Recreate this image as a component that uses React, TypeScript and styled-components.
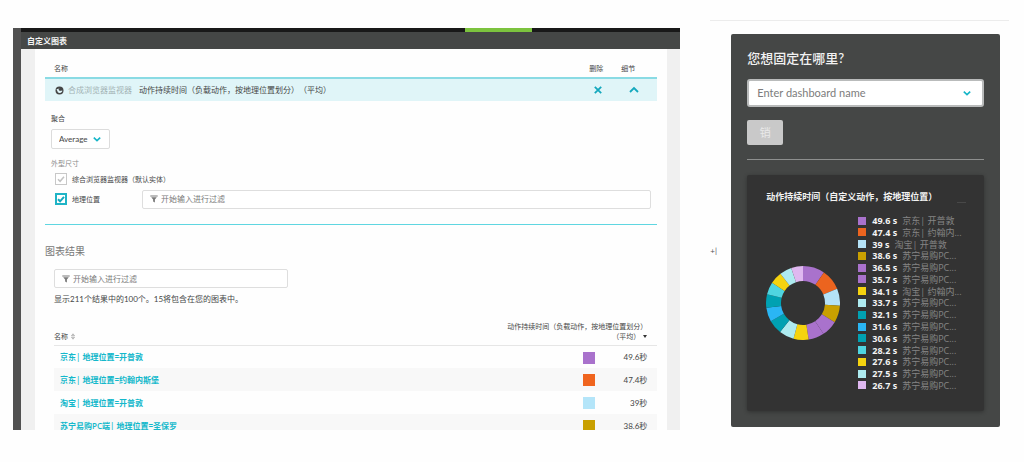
import React from "react";
import styled, { createGlobalStyle } from "styled-components";

const GlobalStyle = createGlobalStyle`
  *, *::before, *::after { box-sizing: border-box; }
  body {
    margin: 0;
    background: #fefefe;
    color: #454646;
    font-family: Lato, "Noto Sans CJK SC", sans-serif;
    font-size: 8px;
    line-height: 12px;
    text-spacing-trim: space-all;
  }
  button, input, select { font: inherit; color: inherit; }
  h1, h2, h3, p, ul { margin: 0; padding: 0; font-weight: 400; }
`;

const Page = styled.div`
  display: flex;
  height: 100vh;
  min-height: 440px;
  padding-left: 13px;
`;

/* ---------- custom chart window ---------- */

const ChartWindow = styled.section`
  flex: 660 1 0;
  min-width: 0;
  display: flex;
  margin: 28px 0 32px;
  border-left: 8px solid #515151;
  overflow: hidden;
`;

const WindowMain = styled.div`
  flex: 1;
  min-width: 0;
  display: flex;
  flex-direction: column;
`;

const LoadBar = styled.div`
  flex: none;
  height: 4px;
  background: linear-gradient(#7cc33e, #7cc33e) 75% 0 / 67px 4px no-repeat #191919;
`;

const WindowHeader = styled.header`
  flex: none;
  display: flex;
  align-items: center;
  height: 17px;
  padding: 0 6px;
  background: #454746;
`;

const WindowTitle = styled.h1`
  font-size: 8px;
  font-weight: 600;
  color: #f4f4f4;
`;

const WindowBody = styled.main`
  flex: 1;
  min-height: 0;
  overflow: hidden;
  padding: 0 10px;
  border: solid #f0f0f0;
  border-width: 0 13px 0 14px;
`;

const MetricsHead = styled.div`
  display: flex;
  justify-content: flex-end;
  align-items: center;
  height: 28px;
  padding: 10px 22px 0 9px;
  gap: 18px;
  font-size: 7px;
`;

const HeadName = styled.span`
  flex: 1;
`;

const MetricRow = styled.div`
  display: flex;
  align-items: center;
  height: 24px;
  padding: 0 18px 0 10px;
  border-top: 2px solid #8adbe4;
  background: #e0f5f8;
`;

const MetricSource = styled.span`
  margin: 0 7px 0 4px;
  color: #a3b3b5;
`;

const MetricName = styled.span`
  flex: 1;
`;

const IconButton = styled.button`
  display: flex;
  padding: 0;
  margin-left: 26px;
  border: 0;
  background: none;
  color: #14a8bd;
  cursor: pointer;
`;

const Settings = styled.div`
  padding: 11px 6px 15px;
  border-bottom: 1px solid #5fd6e1;
  font-size: 7px;
`;

const FieldLabel = styled.label`
  display: block;
  font-size: 7px;
`;

const SelectBox = styled.span<{ $wide?: boolean }>`
  display: ${(p) => (p.$wide ? "grid" : "inline-grid")};
  grid-template-columns: 1fr ${(p) => (p.$wide ? "19px" : "16px")};
  align-items: center;
  width: ${(p) => (p.$wide ? "auto" : "59px")};
  height: ${(p) => (p.$wide ? "28px" : "20px")};
  margin-top: ${(p) => (p.$wide ? "12px" : "5px")};
  border: ${(p) => (p.$wide ? "2px solid #b9bbbb" : "1px solid #dcdcdc")};
  border-radius: ${(p) => (p.$wide ? "3px" : "2px")};
  background: #fff;
  color: #14b5c8;
`;

const NativeSelect = styled.select<{ $wide?: boolean }>`
  grid-area: 1 / 1 / 2 / 3;
  width: 100%;
  height: 100%;
  padding: 0 0 0 ${(p) => (p.$wide ? "8px" : "7px")};
  border: 0;
  outline: 0;
  appearance: none;
  background: none;
  color: ${(p) => (p.$wide ? "#7c7c7c" : "#454646")};
  font-size: ${(p) => (p.$wide ? "11px" : "8px")};
`;

const SelectArrow = styled.span`
  display: flex;
  grid-area: 1 / 2 / 2 / 3;
  pointer-events: none;
`;

const GroupTitle = styled.p`
  margin-top: 8px;
  color: #8b8b8b;
`;

const DimensionRow = styled.div`
  display: flex;
  align-items: center;
  height: 20px;
  padding-left: 4px;
`;

const CheckLabel = styled.label<{ $width?: string }>`
  display: flex;
  align-items: center;
  gap: 5px;
  width: ${(p) => p.$width ?? "auto"};
`;

const CheckBox = styled.input`
  appearance: none;
  width: 12px;
  height: 12px;
  margin: 0;
  border: 1px solid #c8c8c8;
  background: #fff
    url("data:image/svg+xml,%3Csvg xmlns='http://www.w3.org/2000/svg' viewBox='0 0 12 12'%3E%3Cpath d='M3 6.2l2.1 2.1L9 3.8' fill='none' stroke='%23c2c2c2' stroke-width='1.5'/%3E%3C/svg%3E")
    center / 12px no-repeat;
  &:enabled {
    border: 2px solid #1fb4c6;
    background-image: url("data:image/svg+xml,%3Csvg xmlns='http://www.w3.org/2000/svg' viewBox='0 0 12 12'%3E%3Cpath d='M3 6.2l2.1 2.1L9 3.8' fill='none' stroke='%2314a8bd' stroke-width='2'/%3E%3C/svg%3E");
  }
`;

const FilterBox = styled.label<{ $width?: string }>`
  display: flex;
  align-items: center;
  gap: 3px;
  flex: ${(p) => (p.$width ? "none" : "1")};
  width: ${(p) => p.$width ?? "auto"};
  height: 19px;
  padding-left: 7px;
  border: 1px solid #dedede;
  border-radius: 2px;
  background: #fff;
  color: #7a7a7a;
`;

const FilterInput = styled.input`
  flex: 1;
  min-width: 0;
  padding: 0;
  border: 0;
  outline: 0;
  background: none;
  font-size: 8px;
  &::placeholder { color: #7a7a7a; opacity: 1; }
`;

const Results = styled.section`
  padding: 19px 0 0 9px;
`;

const ResultsTitle = styled.h2`
  margin: 0 0 10px -9px;
  font-size: 10px;
  line-height: 15px;
  color: #777;
`;

const ResultCount = styled.p`
  margin: 5px 0 13px;
`;

const ResultTable = styled.table`
  width: 100%;
  border-collapse: collapse;
  table-layout: fixed;
`;

const Column = styled.col<{ $width?: string }>`
  width: ${(p) => p.$width ?? "auto"};
`;

const HeadCell = styled.th<{ $right?: boolean }>`
  height: 27px;
  padding: 0 ${(p) => (p.$right ? "10px" : "0")} 4px 0;
  border-bottom: 1px solid #e6e6e6;
  font-size: 7px;
  font-weight: 400;
  line-height: 10px;
  text-align: ${(p) => (p.$right ? "right" : "left")};
  vertical-align: bottom;
  white-space: nowrap;
`;

const SortIcon = styled.svg`
  margin-left: 3px;
  vertical-align: -1px;
`;

const ResultRow = styled.tr`
  &:nth-child(even) { background: #f8f8f8; }
`;

const Cell = styled.td<{ $right?: boolean }>`
  height: 23px;
  padding: 1px 10px 0 6px;
  text-align: ${(p) => (p.$right ? "right" : "left")};
  white-space: nowrap;
`;

const EntityLink = styled.a`
  color: #14b8cb;
  font-family: "Open Sans", "Noto Sans CJK SC", sans-serif;
  font-weight: 600;
  text-decoration: none;
`;

const Swatch = styled.span<{ $color: string; $size: number }>`
  display: inline-block;
  flex: none;
  width: ${(p) => p.$size}px;
  height: ${(p) => p.$size}px;
  background: ${(p) => p.$color};
  vertical-align: middle;
`;

/* ---------- pin dialog ---------- */

const PinArea = styled.section`
  flex: 299 1 0;
  min-width: 0;
  margin: 20px 15px 0 30px;
  border-top: 1px solid #ececec;
`;

const PinRow = styled.div`
  display: flex;
  align-items: center;
  margin: 13px 9px 0 0;
`;

const CutText = styled.span`
  flex: none;
  width: 21px;
  margin-top: 40px;
  color: #555;
  font-size: 8px;
`;

const PinCard = styled.div`
  flex: 1;
  min-width: 0;
  padding: 16px;
  border-radius: 2px;
  background: #454746;
`;

const PinTitle = styled.h2`
  font-size: 13px;
  line-height: 17px;
  color: #f2f2f2;
  font-weight: 500;
`;

const PinButton = styled.button`
  display: block;
  width: 36px;
  height: 25px;
  margin-top: 13px;
  padding: 0;
  border: 0;
  border-radius: 2px;
  background: #c9c9c9;
  color: #e9e9e9;
  font-size: 11px;
`;

const Divider = styled.hr`
  margin: 14px 0 15px;
  border: 0;
  border-top: 1px solid #8d8f8e;
`;

const Tile = styled.article`
  padding: 15px 18px 20px 19px;
  border-radius: 2px;
  background: #333;
  box-shadow: 0 1px 4px rgba(0, 0, 0, 0.3);
`;

const TileHead = styled.div`
  display: flex;
  justify-content: space-between;
  align-items: flex-end;
`;

const TileTitle = styled.h3`
  font-size: 9px;
  line-height: 13px;
  font-weight: 600;
  white-space: nowrap;
  color: #f2f2f2;
`;

const TileDash = styled.span`
  width: 9px;
  height: 1px;
  background: #484848;
`;

const TileBody = styled.div`
  display: flex;
  align-items: center;
  gap: 18px;
  margin-top: 12px;
`;

const DonutSvg = styled.svg`
  flex: none;
`;

const Legend = styled.ul`
  display: flex;
  flex-direction: column;
  justify-content: space-between;
  height: 176px;
  list-style: none;
  font-family: "Open Sans", "Noto Sans CJK SC", sans-serif;
`;

const LegendItem = styled.li`
  display: flex;
  align-items: center;
  height: 11px;
  font-size: 9px;
  line-height: 11px;
  white-space: nowrap;
  color: #858585;
`;

const LegendValue = styled.strong`
  margin: 0 5px 0 6px;
  font-weight: 700;
  color: #f4f4f4;
`;

const Chevron = ({ up }: { up?: boolean }) => (
  <svg width={up ? 10 : 8} height={up ? 10 : 8} viewBox="0 0 10 10" fill="none" stroke="currentColor" strokeWidth={up ? 1.8 : 2}>
    <path d={up ? "M1 7l4-4 4 4" : "M1 3.300l4 3.700 4-3.700"} />
  </svg>
);

const Funnel = () => (
  <svg width="8" height="8" viewBox="0 0 8 8" fill="currentColor">
    <path d="M.3.5h7.400v1H.3zM1.200 2.200h5.600L4.900 4.600v2.900L3.100 6.500V4.600z" />
  </svg>
);

const results = [
  { name: "京东| 地理位置=开普敦", value: "49.6秒", color: "#a972cc" },
  { name: "京东| 地理位置=约翰内斯堡", value: "47.4秒", color: "#f0651f" },
  { name: "淘宝| 地理位置=开普敦", value: "39秒", color: "#b4e5f9" },
  { name: "苏宁易购PC端| 地理位置=圣保罗", value: "38.6秒", color: "#c9a000" },
];

const slices = [
  { value: 49.6, label: "京东| 开普敦", color: "#a972cc" },
  { value: 47.4, label: "京东| 约翰内...", color: "#ec641f" },
  { value: 39, label: "淘宝| 开普敦", color: "#b4e2f7" },
  { value: 38.6, label: "苏宁易购PC...", color: "#c9a000" },
  { value: 36.5, label: "苏宁易购PC...", color: "#a972cc" },
  { value: 35.7, label: "苏宁易购PC...", color: "#a972cc" },
  { value: 34.1, label: "淘宝| 约翰内...", color: "#f5d30f" },
  { value: 33.7, label: "苏宁易购PC...", color: "#aeebf0" },
  { value: 32.1, label: "苏宁易购PC...", color: "#00a1b2" },
  { value: 31.6, label: "苏宁易购PC...", color: "#2ab6f4" },
  { value: 30.6, label: "苏宁易购PC...", color: "#00a1b2" },
  { value: 28.2, label: "苏宁易购PC...", color: "#4fd5e0" },
  { value: 27.6, label: "苏宁易购PC...", color: "#f5d30f" },
  { value: 27.5, label: "苏宁易购PC...", color: "#aeebf0" },
  { value: 26.7, label: "苏宁易购PC...", color: "#dfb8f0" },
];

const total = slices.reduce((sum, s) => sum + s.value, 0);

const point = (fraction: number, radius: number) => {
  const a = fraction * 2 * Math.PI;
  return `${37 + radius * Math.sin(a)} ${37 - radius * Math.cos(a)}`;
};

const Donut = () => {
  let start = 0;
  return (
    <DonutSvg width="74" height="74" viewBox="0 0 74 74">
      {slices.map((s, i) => {
        const end = start + s.value / total;
        const d = `M${point(start, 37)}A37 37 0 0 1 ${point(end, 37)}L${point(end, 22)}A22 22 0 0 0 ${point(start, 22)}Z`;
        start = end;
        return <path key={i} d={d} fill={s.color} />;
      })}
    </DonutSvg>
  );
};

export default function App() {
  return (
    <>
      <GlobalStyle />
      <Page>
        <ChartWindow>
          <WindowMain>
            <LoadBar />
            <WindowHeader>
              <WindowTitle>自定义图表</WindowTitle>
            </WindowHeader>
            <WindowBody>
              <MetricsHead>
                <HeadName>名称</HeadName>
                <span>删除</span>
                <span>细节</span>
              </MetricsHead>
              <MetricRow>
                <svg width="9" height="9" viewBox="0 0 9 9">
                  <circle cx="4.500" cy="4.500" r="4" fill="#454646" />
                  <path d="M1.500 3.200l3-.7.8 2 2.200.3A3 3 0 0 1 3 6.500z" fill="#e0f5f8" />
                  <circle cx="5" cy="3.500" r="1.300" fill="#454646" />
                </svg>
                <MetricSource>合成浏览器监视器</MetricSource>
                <MetricName>动作持续时间（负载动作，按地理位置划分）（平均）</MetricName>
                <IconButton aria-label="删除">
                  <svg width="10" height="10" viewBox="0 0 10 10" stroke="currentColor" strokeWidth="1.800">
                    <path d="M1.800 1.800l6.400 6.400M8.200 1.800L1.800 8.200" />
                  </svg>
                </IconButton>
                <IconButton aria-label="细节">
                  <Chevron up />
                </IconButton>
              </MetricRow>
              <Settings>
                <FieldLabel htmlFor="aggregation">聚合</FieldLabel>
                <SelectBox>
                  <NativeSelect id="aggregation">
                    <option>Average</option>
                  </NativeSelect>
                  <SelectArrow><Chevron /></SelectArrow>
                </SelectBox>
                <GroupTitle>外型尺寸</GroupTitle>
                <DimensionRow>
                  <CheckLabel>
                    <CheckBox type="checkbox" defaultChecked disabled />
                    综合浏览器监视器（默认实体）
                  </CheckLabel>
                </DimensionRow>
                <DimensionRow>
                  <CheckLabel $width="87px">
                    <CheckBox type="checkbox" defaultChecked />
                    地理位置
                  </CheckLabel>
                  <FilterBox>
                    <Funnel />
                    <FilterInput type="text" placeholder="开始输入进行过滤" />
                  </FilterBox>
                </DimensionRow>
              </Settings>
              <Results>
                <ResultsTitle>图表结果</ResultsTitle>
                <FilterBox $width="234px">
                  <Funnel />
                  <FilterInput type="text" placeholder="开始输入进行过滤" />
                </FilterBox>
                <ResultCount>显示211个结果中的100个。15将包含在您的图表中。</ResultCount>
                <ResultTable>
                  <colgroup>
                    <Column />
                    <Column $width="100px" />
                    <Column $width="52px" />
                  </colgroup>
                  <thead>
                    <tr>
                      <HeadCell>
                        名称
                        <SortIcon width="4" height="7" viewBox="0 0 4 7" fill="none" stroke="#999" strokeWidth=".7">
                          <path d="M.5 2.700L2 .8l1.500 1.900zM.5 4.300L2 6.200l1.500-1.900z" />
                        </SortIcon>
                      </HeadCell>
                      <HeadCell $right colSpan={2}>
                        动作持续时间（负载动作，按地理位置划分）
                        <br />
                        （平均）
                        <SortIcon width="4" height="6" viewBox="0 0 4 6" fill="#333">
                          <path d="M0 1h4L2 4z" />
                        </SortIcon>
                      </HeadCell>
                    </tr>
                  </thead>
                  <tbody>
                    {results.map((r) => (
                      <ResultRow key={r.name}>
                        <Cell>
                          <EntityLink href="#">{r.name}</EntityLink>
                        </Cell>
                        <Cell $right>
                          <Swatch $color={r.color} $size={12} />
                        </Cell>
                        <Cell $right>{r.value}</Cell>
                      </ResultRow>
                    ))}
                  </tbody>
                </ResultTable>
              </Results>
            </WindowBody>
          </WindowMain>
        </ChartWindow>
        <PinArea>
          <PinRow>
            <CutText>+|</CutText>
            <PinCard>
              <PinTitle>您想固定在哪里?</PinTitle>
              <SelectBox $wide>
                <NativeSelect $wide aria-label="Enter dashboard name">
                  <option>Enter dashboard name</option>
                </NativeSelect>
                <SelectArrow><Chevron /></SelectArrow>
              </SelectBox>
              <PinButton>销</PinButton>
              <Divider />
              <Tile>
                <TileHead>
                  <TileTitle>动作持续时间（自定义动作，按地理位置）</TileTitle>
                  <TileDash />
                </TileHead>
                <TileBody>
                  <Donut />
                  <Legend>
                    {slices.map((s, i) => (
                      <LegendItem key={i}>
                        <Swatch $color={s.color} $size={8} />
                        <LegendValue>{s.value} s</LegendValue>
                        {s.label}
                      </LegendItem>
                    ))}
                  </Legend>
                </TileBody>
              </Tile>
            </PinCard>
          </PinRow>
        </PinArea>
      </Page>
    </>
  );
}
